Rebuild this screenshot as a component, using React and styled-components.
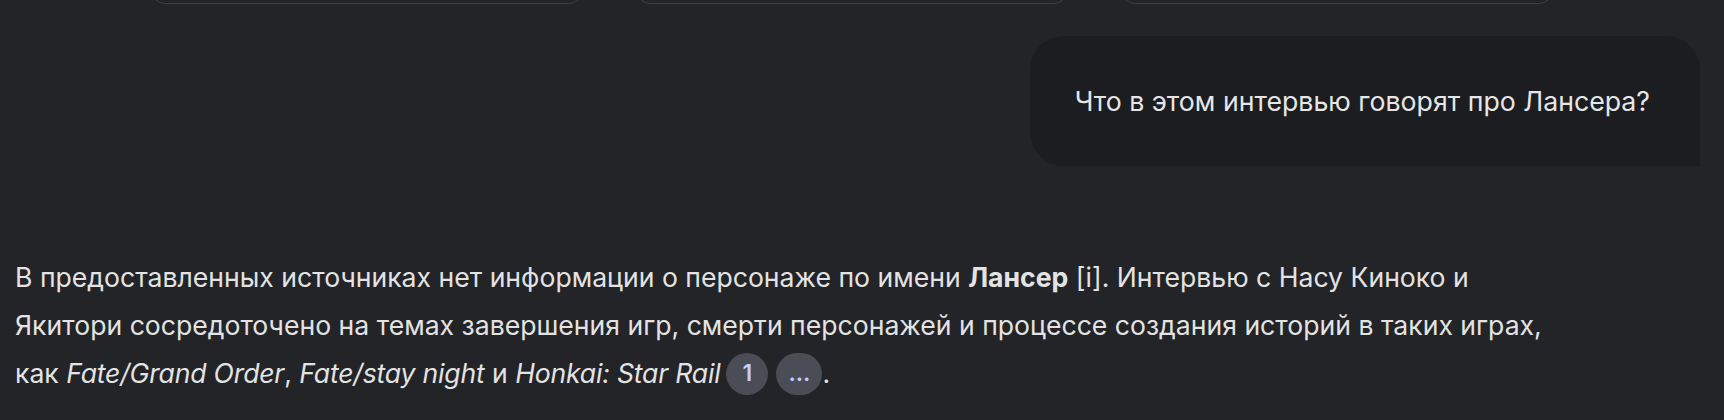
import styled, { createGlobalStyle } from 'styled-components'

const GlobalStyle = createGlobalStyle`
  html, body {
    margin: 0;
    padding: 0;
    background: #222428;
  }
  body {
    font-family: Inter, "Noto Sans", sans-serif;
    color: #e3e3e3;
    overflow: hidden;
  }
`

const Page = styled.div`
  width: 1724px;
  height: 420px;
  background: #222428;
  overflow: hidden;
  display: flex;
  flex-direction: column;
`

// suggestion cards scrolled above the fold, only their bottom edge shows
const CardRow = styled.div`
  display: flex;
  gap: 53px;
  padding-left: 151px;
  margin-top: -60px;
`

const Card = styled.div`
  width: 432px;
  height: 64px;
  box-sizing: border-box;
  border: 1.5px solid #3c3e43;
  border-radius: 14px;
`

const QueryRow = styled.div`
  display: flex;
  justify-content: flex-end;
  padding-right: 24px;
  margin-top: 32px;
`

const Bubble = styled.div`
  height: 130px;
  box-sizing: border-box;
  padding: 0 50px 0 45px;
  display: flex;
  align-items: center;
  background: #1b1d21;
  border-radius: 34px 34px 0 34px;
  font-size: 26.7px;
  color: #e6e6e8;
`

const Answer = styled.p`
  margin: 87px 0 0;
  padding-left: 15px;
  width: 1556px;
  font-size: 26.6px;
  line-height: 48px;
  color: #e3e3e3;

  b { font-weight: 700; }
  i { font-style: italic; letter-spacing: -0.2px; }
`

const Cite = styled.span`
  display: inline-flex;
  align-items: center;
  justify-content: center;
  box-sizing: border-box;
  height: 42px;
  min-width: ${p => (p.$wide ? '46px' : '42px')};
  padding: 0 ${p => (p.$wide ? '9px' : '0')};
  margin-left: ${p => (p.$first ? '6px' : '8px')};
  border-radius: 21px;
  background: #4a4c56;
  color: #c5cbff;
  font-size: 23px;
  font-weight: 600;
  line-height: 1;
  vertical-align: middle;
  position: relative;
  top: -2px;
`

export default function App() {
  return (
    <>
      <GlobalStyle />
      <Page>
        <CardRow>
          <Card />
          <Card />
          <Card />
        </CardRow>
        <QueryRow>
          <Bubble>Что в этом интервью говорят про Лансера?</Bubble>
        </QueryRow>
        <Answer>
          В предоставленных источниках нет информации о персонаже по имени <b>Лансер</b> [i]. Интервью с Насу Киноко и
          Якитори сосредоточено на темах завершения игр, смерти персонажей и процессе создания историй в таких играх,
          как <i>Fate/Grand Order</i>, <i>Fate/stay night</i> и <i>Honkai: Star Rail</i>
          <Cite $first>1</Cite>
          <Cite $wide>...</Cite>.
        </Answer>
      </Page>
    </>
  )
}
